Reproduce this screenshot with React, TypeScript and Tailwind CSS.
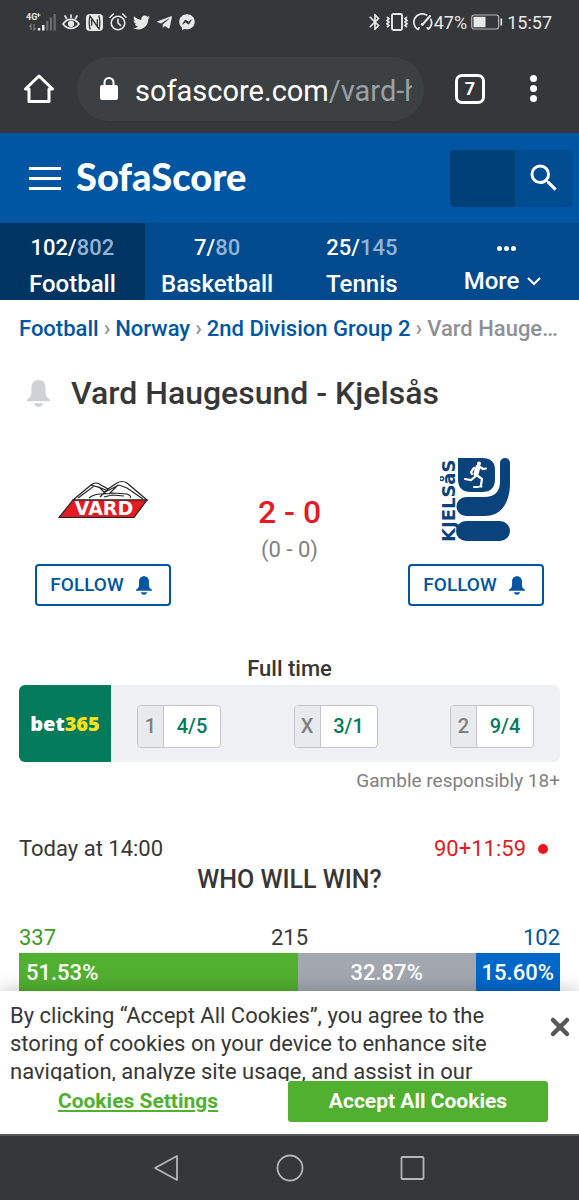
import type { ReactNode } from 'react'
import { FaTwitter, FaTelegramPlane, FaFacebookMessenger } from 'react-icons/fa'
import { MdSearch, MdBluetooth } from 'react-icons/md'

const sports = [
  { name: 'Football', live: '102', total: '802', active: true },
  { name: 'Basketball', live: '7', total: '80', active: false },
  { name: 'Tennis', live: '25', total: '145', active: false },
]

const crumbs = ['Football', 'Norway', '2nd Division Group 2']

const odds = [
  { label: '1', value: '4/5' },
  { label: 'X', value: '3/1' },
  { label: '2', value: '9/4' },
]

const votes = [
  { count: 337, share: 51.53, text: 'text-[#3f9a24]', bar: 'bg-[#52b030] pl-[7px] text-left' },
  { count: 215, share: 32.87, text: 'text-[#373737]', bar: 'bg-[#a2a7b0] text-center' },
  { count: 102, share: 15.6, text: 'text-[#0056a3]', bar: 'bg-[#0068c9] text-center' },
]

function BellIcon({ className }: { className?: string }) {
  return (
    <svg viewBox="0 0 24 28" fill="currentColor" className={className} aria-hidden="true">
      <path d="M12 0C7 0 4.600 3.600 4.600 8v5.500c0 3-1.600 4.800-4 6.300-.5.300-.6.800-.6 1.200v1h24v-1c0-.4-.1-.9-.6-1.200-2.400-1.500-4-3.300-4-6.300V8C19.400 3.600 17 0 12 0z" />
      <path d="M7.200 24.200h9.600C16 26.600 14.300 28 12 28s-4-1.400-4.800-3.800z" />
    </svg>
  )
}

function SignalIcon() {
  return (
    <svg viewBox="0 0 30 18" className="w-[30px] h-[18px]" aria-hidden="true">
      <text x="0" y="7" fontSize="9" fontWeight="700" fill="#e8e8e8" fontFamily="Roboto, sans-serif">4G</text>
      <path d="M12.500 0v4M10.500 2h4" stroke="#e8e8e8" strokeWidth="1" />
      <path d="M5 17v-5l-1.500 2M8 11v6l1.500-2" stroke="#77787b" strokeWidth="1.300" fill="none" />
      <path d="M13 15v2.500M17.300 12v5.500" stroke="#f1f1f1" strokeWidth="2.400" />
      <path d="M21.300 8v9.500M25 4.500v13M28.700 1v16.500" stroke="#6a6b6e" strokeWidth="2.200" />
    </svg>
  )
}

function EyeIcon() {
  return (
    <svg viewBox="0 0 18 16" className="w-[18px] h-[16px]" fill="none" stroke="#e8e8e8" strokeWidth="1.700" strokeLinecap="round" aria-hidden="true">
      <path d="M1 10c2.300-3.300 5-4.600 8-4.600s5.700 1.300 8 4.600c-2.300 3-5 4.400-8 4.400S3.300 13 1 10z" />
      <circle cx="9" cy="9.800" r="2.300" fill="#e8e8e8" />
      <path d="M9 1v2.500M3 2l1.500 2.500M15 2l-1.500 2.500" />
    </svg>
  )
}

function NfcIcon() {
  return (
    <svg viewBox="0 0 18 18" className="w-[17px] h-[17px]" aria-hidden="true">
      <rect width="18" height="18" rx="4" fill="#e8e8e8" />
      <path d="M4.500 16.500C3.300 13 3.300 6 4.300 1.500M4.500 2.500 12 13V5.500M13.500 1.500c1.200 3.500 1.200 10.500.2 15M13.500 15.500 6 5v7.500" fill="none" stroke="#36373b" strokeWidth="1.400" />
    </svg>
  )
}

function AlarmIcon() {
  return (
    <svg viewBox="0 0 18 18" className="w-[18px] h-[18px]" fill="none" stroke="#e8e8e8" strokeWidth="1.600" strokeLinecap="round" aria-hidden="true">
      <circle cx="9" cy="10" r="6.800" />
      <path d="M9 6.300V10l2.500 2.300M1 4.200 4.300 1M17 4.200 13.700 1" />
    </svg>
  )
}

function VibrateIcon() {
  return (
    <svg viewBox="0 0 22 18" className="w-[22px] h-[18px]" fill="none" stroke="#e8e8e8" aria-hidden="true">
      <rect x="6" y="1" width="10" height="16" rx="1.500" strokeWidth="1.900" />
      <path d="m1 4 2 1.700L1 7.400l2 1.700-2 1.700 2 1.700L1 14.200M21 4l-2 1.700 2 1.700-2 1.700 2 1.700-2 1.700 2 1.700" strokeWidth="1.700" />
    </svg>
  )
}

function GaugeIcon() {
  return (
    <svg viewBox="0 0 20 18" className="w-[20px] h-[18px]" fill="none" stroke="#e8e8e8" strokeWidth="1.700" strokeLinecap="round" aria-hidden="true">
      <path d="M5 16.500A8.200 8.200 0 0 1 13.500 2M17.800 6.300a8.200 8.200 0 0 1-2.400 9.700l-1.200-1.200M5 16.500l1-1.700" />
      <path d="M9.500 11.500 17 3" strokeWidth="2" />
      <circle cx="9.300" cy="11.200" r="1.500" fill="#e8e8e8" stroke="none" />
    </svg>
  )
}

function StatusBar() {
  return (
    <div className="h-11 shrink-0 flex items-center justify-between pl-[26px] pr-[27px] text-[#e8e8e8]">
      <div className="flex items-center gap-1.5">
        <SignalIcon />
        <EyeIcon />
        <NfcIcon />
        <AlarmIcon />
        <FaTwitter className="w-[17px] h-[17px]" />
        <FaTelegramPlane className="w-[17px] h-[17px]" />
        <FaFacebookMessenger className="w-[16px] h-[16px]" />
      </div>
      <div className="flex items-center text-[18px]">
        <MdBluetooth className="w-5 h-5 mr-px" />
        <VibrateIcon />
        <span className="w-[5px]" />
        <GaugeIcon />
        <span className="ml-px">47%</span>
        <svg viewBox="0 0 32 16" className="w-8 h-4 mx-1" aria-hidden="true">
          <rect x=".7" y="1" width="27" height="14" rx="2.500" fill="none" stroke="#b5b6b8" strokeWidth="1.200" />
          <rect x="2.500" y="2.800" width="12" height="10.400" fill="#e8e8e8" />
          <path d="M30.300 4.500v7" stroke="#e8e8e8" strokeWidth="1.600" />
        </svg>
        <span>15:57</span>
      </div>
    </div>
  )
}

function BrowserBar() {
  return (
    <div className="h-[89px] shrink-0 flex items-center pl-6 pr-[42px]">
      <button aria-label="Home">
        <svg viewBox="0 0 30 30" className="w-[30px] h-[30px] block" fill="none" stroke="#fff" strokeWidth="3" strokeLinejoin="round" aria-hidden="true">
          <path d="M15 2 1.500 15H5v12.500h20V15h3.500z" />
        </svg>
      </button>
      <button className="ml-[23px] mr-[31px] h-16 flex-1 min-w-0 flex items-center gap-[17px] rounded-full bg-[#3c4043] pl-[23px] pr-3 text-left">
        <svg viewBox="0 0 18 24" className="w-[18px] h-6 shrink-0" aria-hidden="true">
          <rect y="8" width="18" height="15" rx="2" fill="#fff" />
          <path d="M4.500 9V5.500a4.500 4.500 0 0 1 9 0V9" fill="none" stroke="#fff" strokeWidth="2" />
        </svg>
        <span className="overflow-hidden whitespace-nowrap pt-1 text-[29px] leading-9 text-white">
          sofascore.com<span className="text-[#9aa0a6]">/vard-h</span>
        </span>
      </button>
      <button className="w-[30px] h-[30px] rounded-[7px] border-[3px] border-white text-white text-[18px] leading-6 font-bold" aria-label="7 open tabs">
        7
      </button>
      <button className="ml-[45px] flex flex-col gap-[3px]" aria-label="Menu">
        <span className="w-[7px] h-[7px] rounded-full bg-white" />
        <span className="w-[7px] h-[7px] rounded-full bg-white" />
        <span className="w-[7px] h-[7px] rounded-full bg-white" />
      </button>
    </div>
  )
}

function SiteHeader() {
  return (
    <header className="shrink-0 bg-[#0056a3] text-white">
      <div className="h-[90px] flex items-center pl-[29px] pr-1.5">
        <button className="flex flex-col gap-[7px]" aria-label="Open menu">
          <span className="w-8 h-[3px] bg-white" />
          <span className="w-8 h-[3px] bg-white" />
          <span className="w-8 h-[3px] bg-white" />
        </button>
        <a href="#" className="ml-[15px] pb-1 font-[Lato] font-black text-[38px] leading-10">SofaScore</a>
        <form className="ml-auto flex h-[57px] rounded-[4px] overflow-hidden">
          <input type="text" aria-label="Search" className="w-[65px] bg-[#004079] px-2 outline-none" />
          <button type="button" className="w-[58px] flex items-center justify-center bg-[#004c90]" aria-label="Search">
            <MdSearch className="w-9 h-9" />
          </button>
        </form>
      </div>
      <nav className="grid grid-cols-4 h-[77px] bg-[#004a8d] font-medium">
        {sports.map((s) => (
          <a
            key={s.name}
            href="#"
            className={`flex flex-col items-center pt-[11px] gap-1.5 ${s.active ? 'bg-[#003462]' : ''}`}
          >
            <span className="text-[22px] leading-7">
              {s.live}/<span className="text-[#92b3d6]">{s.total}</span>
            </span>
            <span className="text-[24px] leading-8">{s.name}</span>
          </a>
        ))}
        <button className="flex flex-col items-center pt-[23px]">
          <span className="flex gap-[2px]">
            <span className="w-[5px] h-[5px] rounded-full bg-white" />
            <span className="w-[5px] h-[5px] rounded-full bg-white" />
            <span className="w-[5px] h-[5px] rounded-full bg-white" />
          </span>
          <span className="mt-3.5 pr-2 flex items-center gap-2 text-[24px] leading-8">
            More
            <svg viewBox="0 0 14 9" className="w-[14px] h-[9px]" fill="none" stroke="#fff" strokeWidth="2.200" aria-hidden="true">
              <path d="m1 1 6 6 6-6" />
            </svg>
          </span>
        </button>
      </nav>
    </header>
  )
}

function VardLogo() {
  return (
    <svg viewBox="0 0 90 40" className="w-[90px] h-10" role="img" aria-label="Vard">
      <path d="M15 20 33 5q5-4 10 0l7 4 9-6q5-3 10 0l20 17z" fill="#fff" stroke="#222" strokeWidth="1.200" />
      <path d="M15 20h74L76 37.500H1z" fill="#e31b23" stroke="#222" strokeWidth="1.200" />
      <path d="m20 18 16-12 5 1 7 7M33 5l10 3 7 3M50 9l-8 8M47 12l14-7 8 3 16 11M60 5l-9 9M31 18q5-4 12-4t12-1l14 1q5 2 3 4M46 17l8-2 12 1" fill="none" stroke="#222" strokeWidth="1.100" />
      <text x="46" y="35" textAnchor="middle" fontSize="19" fontWeight="700" fill="#fff" fontFamily="DejaVu Sans, sans-serif">VARD</text>
    </svg>
  )
}

function KjelsasLogo() {
  return (
    <svg viewBox="0 0 72 86" className="w-[72px] h-[86px]" role="img" aria-label="Kjelsås">
      <text transform="translate(15 85) rotate(-90)" fontSize="18" fontWeight="700" fill="#0a437c" fontFamily="DejaVu Sans, sans-serif">KJELSåS</text>
      <g fill="#0a437c">
        <path d="M18 1h24q13 0 13 12v9q0 13-13 13H31Q18 35 18 22z" />
        <path d="M60 6a5 5 0 0 1 10 0v20c0 20-9 33-25 33H26a9.500 9.500 0 0 1 0-19h18c11 0 16-6 16-15z" />
        <rect x="16" y="64" width="54" height="20" rx="10" />
      </g>
      <g stroke="#fff" fill="none" strokeLinecap="round">
        <circle cx="39" cy="6.500" r="2" fill="#fff" stroke="none" />
        <path d="m38 10-2 7" strokeWidth="5" />
        <path d="m40 10 3 2 3-.5M34 11l-3 4 1 2M36 19l-5 4-6-1M38 19l4 3-1 6" strokeWidth="2.200" />
        <path d="M34 30h4M39.500 29.500h2" strokeWidth="2" />
      </g>
    </svg>
  )
}

function Team({ logo }: { logo: ReactNode }) {
  return (
    <div className="w-[136px] flex flex-col items-center">
      <div className="h-[90px] flex items-center">{logo}</div>
      <button className="mt-[19px] w-full h-[42px] pr-1 flex items-center justify-center gap-3 rounded-[4px] border-2 border-[#0056a3] text-[#0056a3] text-[19px] font-medium">
        FOLLOW
        <BellIcon className="w-4 h-[19px]" />
      </button>
    </div>
  )
}

function MatchPage() {
  return (
    <main className="flex-1 min-h-0 overflow-hidden bg-white px-[19px] text-[#373737]">
      <nav className="h-14 flex items-center gap-[5px] text-[22px] font-medium whitespace-nowrap" aria-label="Breadcrumb">
        {crumbs.map((c) => (
          <span key={c} className="flex items-center gap-[5px]">
            <a href="#" className="text-[#0056a3]">{c}</a>
            <span className="text-[#8e9097]">›</span>
          </span>
        ))}
        <span className="truncate text-[#8e9097]">Vard Haugesund - Kjelsås</span>
      </nav>

      <div className="mt-[17px] flex items-center pl-2">
        <button aria-label="Match notifications" className="text-[#ced2d7]">
          <BellIcon className="w-[23px] h-[27px]" />
        </button>
        <h1 className="ml-[21px] text-[32px] leading-10 font-medium">Vard Haugesund - Kjelsås</h1>
      </div>

      <section className="mt-[42px] px-4 flex justify-between">
        <Team logo={<VardLogo />} />
        <div className="pt-[37px] text-center">
          <p className="text-[32px] leading-10 font-medium text-[#e31b23]">2 - 0</p>
          <p className="mt-1 text-[22px] leading-7 text-[#808080]">(0 - 0)</p>
        </div>
        <Team logo={<KjelsasLogo />} />
      </section>

      <h2 className="mt-[49px] text-center text-[22px] leading-7 font-medium">Full time</h2>
      <div className="mt-[2px] h-[77px] flex rounded-md overflow-hidden bg-[#f0f1f5]">
        <a href="#" className="w-[92px] flex items-center justify-center bg-[#047b5b] font-['Open_Sans'] font-extrabold text-[20px] text-white">
          bet<span className="text-[#fce11a]">365</span>
        </a>
        <div className="flex-1 flex items-center justify-between px-[26px] pt-1.5">
          {odds.map((o) => (
            <button key={o.label} className="w-[84px] h-[43px] flex rounded-[4px] overflow-hidden border border-[#c4c5ca] bg-white font-medium text-[20px] leading-[41px]">
              <span className="w-[26px] border-r border-[#c4c5ca] bg-[#e9eaee] text-[#808080]">{o.label}</span>
              <span className="flex-1 text-[#047b5b]">{o.value}</span>
            </button>
          ))}
        </div>
      </div>
      <p className="mt-[5px] text-right text-[19px] leading-7 text-[#808080]">Gamble responsibly 18+</p>

      <div className="mt-10 flex items-center justify-between text-[22px] leading-7">
        <span>Today at 14:00</span>
        <span className="flex items-center gap-3 pr-3 text-[#e31b23]">
          90+11:59
          <span className="w-2.5 h-2.5 rounded-full bg-[#f0141e]" />
        </span>
      </div>
      <h2 className="mt-px text-center text-[25px] leading-8 font-medium">WHO WILL WIN?</h2>

      <div className="mt-[26px] flex justify-between text-[22px] leading-[31px]">
        {votes.map((v) => (
          <span key={v.count} className={v.text}>{v.count}</span>
        ))}
      </div>
      <div className="flex h-12 text-[22px] leading-10 font-medium text-white">
        {votes.map((v) => (
          <div key={v.count} className={v.bar} style={{ width: `${v.share}%` }}>
            {v.share.toFixed(2)}%
          </div>
        ))}
      </div>
    </main>
  )
}

function CookieBanner() {
  return (
    <section className="relative shrink-0 bg-white text-[#373737] pb-3 shadow-[0_0_18px_rgba(0,0,0,0.25)]" aria-label="Cookie consent">
      <div className="flex items-start pl-2.5 pr-2">
        <p className="h-[90px] flex-1 pr-10 pt-[11px] overflow-hidden text-[22px] leading-[28px]">
          By clicking “Accept All Cookies”, you agree to the storing of cookies on your device to enhance site
          navigation, analyze site usage, and assist in our
        </p>
        <button className="mt-[25px]" aria-label="Close">
          <svg viewBox="0 0 22 22" className="w-[22px] h-[22px]" stroke="#58585a" strokeWidth="4.500" strokeLinecap="round" aria-hidden="true">
            <path d="m4 4 14 14M18 4 4 18" />
          </svg>
        </button>
      </div>
      <div className="flex pr-[31px]">
        <button className="flex-1 h-[41px] pr-3 text-[21px] font-bold text-[#52b030] underline">Cookies Settings</button>
        <button className="w-[260px] h-[41px] rounded-[3px] bg-[#52b030] text-[21px] font-bold text-white">
          Accept All Cookies
        </button>
      </div>
    </section>
  )
}

function SystemNav() {
  return (
    <div className="relative h-[66px] shrink-0 flex items-center justify-center gap-[95px] bg-[#36373b] border-t-2 border-[#55565a]">
      <button aria-label="Back">
        <svg viewBox="0 0 28 28" className="w-7 h-7 block" fill="none" stroke="#b4b5b8" strokeWidth="1.800" strokeLinejoin="round" aria-hidden="true">
          <path d="M24 2v24L2 14z" />
        </svg>
      </button>
      <button aria-label="Home screen">
        <svg viewBox="0 0 28 28" className="w-7 h-7 block" fill="none" stroke="#b4b5b8" strokeWidth="1.800" aria-hidden="true">
          <circle cx="14" cy="14" r="12.500" />
        </svg>
      </button>
      <button aria-label="Recent apps">
        <svg viewBox="0 0 28 28" className="w-7 h-7 block" fill="none" stroke="#b4b5b8" strokeWidth="1.800" aria-hidden="true">
          <rect x="2.500" y="3" width="22" height="22" rx="1" />
        </svg>
      </button>
    </div>
  )
}

export default function App() {
  return (
    <div className="h-screen flex flex-col bg-[#36373b] font-[Roboto,sans-serif]">
      <StatusBar />
      <BrowserBar />
      <SiteHeader />
      <MatchPage />
      <CookieBanner />
      <SystemNav />
    </div>
  )
}
